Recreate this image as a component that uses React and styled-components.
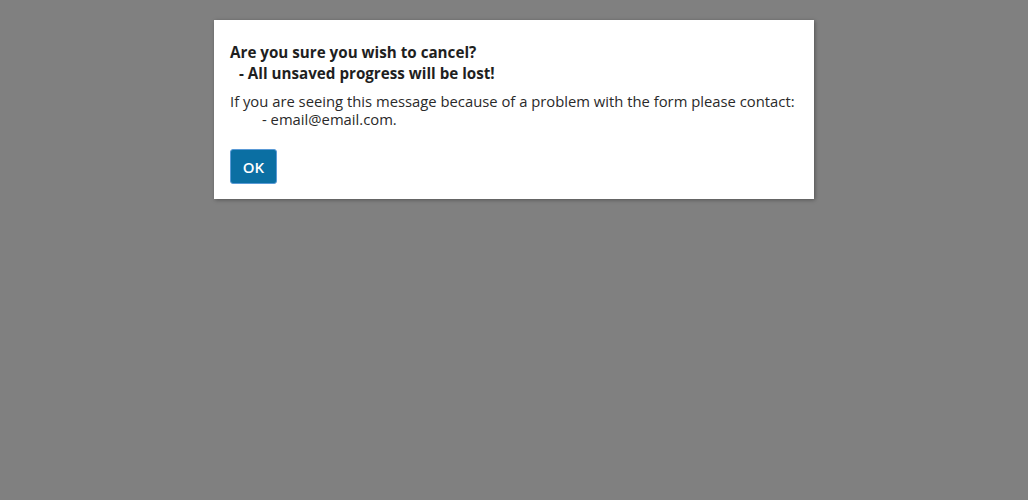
import React from "react";
import styled, { createGlobalStyle } from "styled-components";

const GlobalStyle = createGlobalStyle`
html, body {
margin: 0;
padding: 0;
height: 100%;
background: #808080;
}
#root {
min-height: 100vh;
}
`;

const Overlay = styled.div`
display: flex;
justify-content: center;
align-items: flex-start;
width: 100%;
min-height: 100vh;
padding-top: 20px;
box-sizing: border-box;
background: #808080;
font-family: "Open Sans", "Noto Sans", sans-serif;
color: #222;
`;

const Dialog = styled.div`
width: 600px;
box-sizing: border-box;
background: #fff;
padding: 22px 16px 15px 16px;
box-shadow: 1px 1px 4px rgba(0, 0, 0, 0.35);
`;

const Title = styled.h2`
margin: 0;
font-size: 15.2px;
font-weight: 700;
line-height: 21px;
color: #1f1f1f;
`;

const Message = styled.p`
margin: 8px 0 0 0;
font-size: 14.8px;
line-height: 18px;
color: #2a2a2a;
`;

const Line = styled.span`
display: block;
padding-left: ${(p) => p.indent || 0}px;
white-space: pre;
`;

const Actions = styled.div`
display: flex;
margin-top: 21px;
`;

const Button = styled.button`
box-sizing: border-box;
width: 47px;
height: 35px;
padding: 0;
border: 1px solid #5a9ad6;
border-radius: 3px;
background: #0b6fa3;
color: #fff;
font-family: "Open Sans", "Noto Sans", sans-serif;
font-size: 15px;
font-weight: 600;
cursor: pointer;
`;

const App = () => {
    return (
        <>
            <GlobalStyle />
            <Overlay>
                <Dialog>
                    <Title>
                        <Line>Are you sure you wish to cancel?</Line>
                        <Line indent={9}>- All unsaved progress will be lost!</Line>
                    </Title>
                    <Message>
                        <Line>If you are seeing this message because of a problem with the form please contact:</Line>
                        <Line indent={32}>- email@email.com.</Line>
                    </Message>
                    <Actions>
                        <Button>OK</Button>
                    </Actions>
                </Dialog>
            </Overlay>
        </>
    )
}

export default App;
